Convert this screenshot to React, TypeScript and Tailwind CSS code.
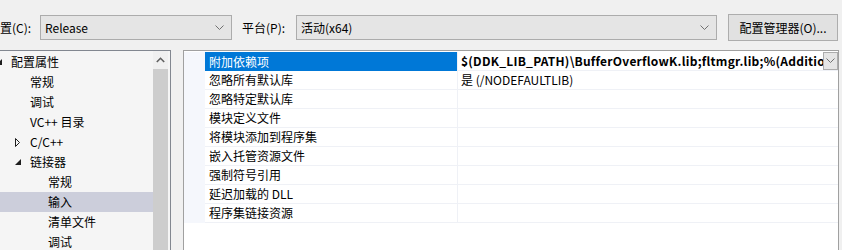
import React from 'react';

const treeRows = [
    { label: '配置属性', indent: -4, arrow: 'open' },
    { label: '常规', indent: 30 },
    { label: '调试', indent: 30 },
    { label: 'VC++ 目录', indent: 30 },
    { label: 'C/C++', indent: 30, arrow: 'closed' },
    { label: '链接器', indent: 30, arrow: 'open' },
    { label: '常规', indent: 48 },
    { label: '输入', indent: 48, selected: true },
    { label: '清单文件', indent: 48 },
    { label: '调试', indent: 48 },
];

const gridRows = [
    { name: '附加依赖项', value: '$(DDK_LIB_PATH)\\BufferOverflowK.lib;fltmgr.lib;%(AdditionalDependencies)', bold: true, selected: true },
    { name: '忽略所有默认库', value: '是 (/NODEFAULTLIB)' },
    { name: '忽略特定默认库', value: '' },
    { name: '模块定义文件', value: '' },
    { name: '将模块添加到程序集', value: '' },
    { name: '嵌入托管资源文件', value: '' },
    { name: '强制符号引用', value: '' },
    { name: '延迟加载的 DLL', value: '' },
    { name: '程序集链接资源', value: '' },
];

const Chevron = ({ className }: { className?: string }) => (
    <svg width="9" height="6" viewBox="0 0 9 6" className={className}>
        <path d="M0.5 0.5 L4.5 4.5 L8.5 0.5" fill="none" stroke="#707070" strokeWidth="1" />
    </svg>
);

const Arrow = ({ kind }: { kind?: string }) => {
    if (kind === 'open') {
        return (
            <svg width="6" height="6" viewBox="0 0 6 6" className="shrink-0">
                <path d="M6 0 L6 6 L0 6 Z" fill="#1e1e1e" />
            </svg>
        );
    }
    if (kind === 'closed') {
        return (
            <svg width="5" height="9" viewBox="0 0 5 9" className="shrink-0">
                <path d="M0.5 0.5 L4.5 4.5 L0.5 8.5 Z" fill="none" stroke="#1e1e1e" strokeWidth="1" />
            </svg>
        );
    }
    return null;
};

const TreeRow = ({ row }: { row: (typeof treeRows)[number] }) => {
    const arrowLeft = row.arrow && row.indent > 0 ? row.indent - 15 : row.indent;
    return (
        <div className={`h-[20px] flex items-center relative ${row.selected ? 'bg-[#cccedb]' : ''}`}>
            {row.arrow && (
                <div className="absolute top-0 h-[20px] flex items-center" style={{ left: arrowLeft }}>
                    <Arrow kind={row.arrow} />
                </div>
            )}
            <span style={{ paddingLeft: row.indent < 0 ? 11 : row.indent }} className="whitespace-nowrap">
                {row.label}
            </span>
        </div>
    );
};

export default function App() {
    return (
        <div className="w-[842px] h-[250px] overflow-hidden bg-[#f0f0f0] text-[12px] text-black font-['Noto_Sans_CJK_SC',sans-serif] leading-none">
            <div className="h-[50px] pt-[5px] flex items-center">
                <span className="w-[40px] whitespace-nowrap">置(C):</span>
                <div className="w-[192px] h-[25px] bg-[#e5e5e5] border border-[#acacac] flex items-center pl-[4px] pr-[7px]">
                    <span className="flex-1">Release</span>
                    <Chevron />
                </div>
                <span className="w-[54px] ml-[10px] whitespace-nowrap">平台(P):</span>
                <div className="w-[421px] h-[25px] bg-[#e5e5e5] border border-[#acacac] flex items-center pl-[4px] pr-[7px]">
                    <span className="flex-1">活动(x64)</span>
                    <Chevron />
                </div>
                <button className="ml-[11px] w-[110px] h-[27px] bg-[#e1e1e1] border border-[#adadad] flex items-center justify-center">
                    配置管理器(O)...
                </button>
            </div>

            <div className="flex h-[200px]">
                <div className="w-[171px] h-full border-t border-r border-[#828790] bg-[#f5f5f5] flex">
                    <div className="w-[153px] pt-[1px] overflow-hidden">
                        {treeRows.map((row, i) => (
                            <TreeRow key={i} row={row} />
                        ))}
                    </div>
                    <div className="w-[15px] flex flex-col bg-[#f0f0f0]">
                        <div className="h-[18px] flex items-center justify-center">
                            <svg width="9" height="6" viewBox="0 0 9 6">
                                <path d="M0.8 5 L4.5 1.3 L8.2 5" fill="none" stroke="#606060" strokeWidth="1.6" />
                            </svg>
                        </div>
                        <div className="flex-1 bg-[#cdcdcd]" />
                    </div>
                </div>

                <div className="ml-[12px] w-[656px] h-full border-t border-l border-r border-[#a0a0a0] bg-white pt-[1px]">
                    {gridRows.map((row, i) => (
                        <div key={i} className="flex h-[19px]">
                            <div className="w-[21px] bg-[#f5f7fc]" />
                            <div
                                className={`w-[252px] flex items-center pl-[4px] whitespace-nowrap ${
                                    row.selected ? 'bg-[#0078d7] text-white' : 'border-b border-[#eff1f6]'
                                }`}
                            >
                                {row.name}
                            </div>
                            <div className="w-[1px] bg-[#eff1f6]" />
                            <div className="flex-1 min-w-0 flex items-center border-b border-[#eff1f6]">
                                <span
                                    className={`flex-1 min-w-0 pl-[3px] leading-[18px] whitespace-nowrap overflow-hidden ${
                                        row.bold ? 'font-bold tracking-[0.25px]' : ''
                                    }`}
                                >
                                    {row.value}
                                </span>
                                {row.selected && (
                                    <div className="w-[15px] h-[18px] bg-[#e5e5e5] border border-[#acacac] flex items-center justify-center shrink-0">
                                        <Chevron />
                                    </div>
                                )}
                            </div>
                        </div>
                    ))}
                </div>
            </div>
        </div>
    );
}
